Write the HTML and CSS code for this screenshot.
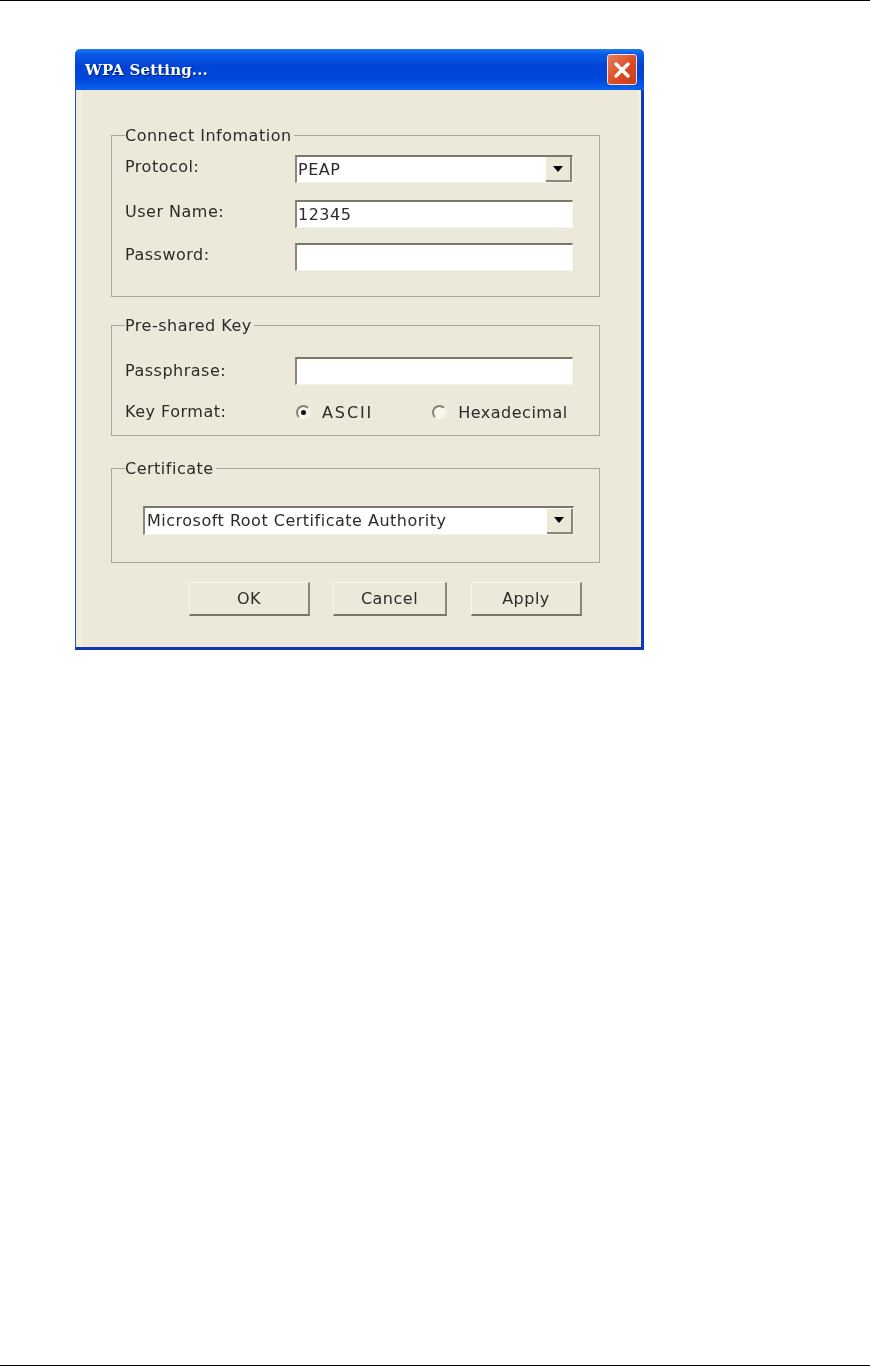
FILE: index.html
```html
<!DOCTYPE html>
<html>
<head>
<title>WPA Setting</title>
<link rel="stylesheet" href="styles.css">
</head>
<body>
<div class="page">
  <div class="dialog">
    <div class="titlebar">
      <span class="title">WPA Setting...</span>
      <span class="close">
        <svg width="18" height="18" viewBox="0 0 18 18"><path d="M3 3 L15 15 M15 3 L3 15" stroke="#fff" stroke-width="3.4" stroke-linecap="round"/></svg>
      </span>
    </div>
    <div class="client">

      <fieldset class="group connect">
        <legend>Connect Infomation</legend>
        <div class="label">Protocol:</div>
        <div class="field combo"><span class="value">PEAP</span><span class="drop"><span class="arrow"></span></span></div>
        <div class="label">User Name:</div>
        <div class="field"><span class="value">12345</span></div>
        <div class="label">Password:</div>
        <div class="field"></div>
      </fieldset>

      <fieldset class="group preshared">
        <legend>Pre-shared Key</legend>
        <div class="label">Passphrase:</div>
        <div class="field"></div>
        <div class="label">Key Format:</div>
        <div class="radios">
          <span class="radio-item ascii"><span class="radio on"></span>ASCII</span>
          <span class="radio-item"><span class="radio"></span>Hexadecimal</span>
        </div>
      </fieldset>

      <fieldset class="group cert">
        <legend>Certificate</legend>
        <div class="field combo"><span class="value">Microsoft Root Certificate Authority</span><span class="drop"><span class="arrow"></span></span></div>
      </fieldset>

      <div class="buttons">
        <div class="btn ok">OK</div>
        <div class="btn cancel">Cancel</div>
        <div class="btn apply">Apply</div>
      </div>
    </div>
  </div>
</div>
</body>
</html>
```

FILE: styles.css
```css
html, body { margin: 0; padding: 0; background: #fff; }

.page {
  box-sizing: border-box;
  height: 1366px;
  padding: 48px 0 0 75px;
  border-top: 1px solid #000;
  border-bottom: 1px solid #000;
}

.dialog {
  width: 569px;
  font-family: "DejaVu Sans", sans-serif;
  font-size: 16px;
  letter-spacing: 0.5px;
  color: #2b2b2b;
  filter: blur(0.5px);
}

.titlebar {
  height: 41px;
  box-sizing: border-box;
  padding: 0 7px 0 10px;
  display: flex;
  align-items: center;
  justify-content: space-between;
  border-radius: 5px 5px 0 0;
  background: linear-gradient(#1f7cf0 0, #0a5ae6 12%, #0042d6 45%, #0048dc 75%, #0a62ee 100%);
}
.title {
  font-family: "DejaVu Serif", serif;
  font-weight: bold;
  font-size: 15px;
  letter-spacing: 0.15px;
  color: #fff;
  text-shadow: 1px 1px 1px #00227a;
}
.close {
  width: 30px;
  height: 31px;
  box-sizing: border-box;
  display: flex;
  align-items: center;
  justify-content: center;
  border: 1px solid #f0e4dc;
  border-radius: 3px;
  background: linear-gradient(135deg, #e8805e, #dd4a24 55%, #c83c18);
}

.client {
  box-sizing: border-box;
  height: 560px;
  padding: 37px 0 0 35px;
  background: #ece8da;
  border-left: 1px solid #1a5ad8;
  border-right: 3px solid #0a3ab8;
  border-bottom: 3px solid #0a3ab8;
  box-shadow: inset 2px 0 #f3e6e0, inset 6px 0 #f2efd8, inset 0 -3px #f3e6e0, inset -3px 0 #f4f0d8;
}

.group {
  box-sizing: border-box;
  width: 489px;
  margin: 0;
  border: 1px solid #aba798;
  padding: 0 26px 0 13px;
  display: grid;
  grid-template-columns: 170px 278px;
  align-items: center;
}
.group legend {
  line-height: 17px;
  padding: 0 2px 0 0;
  margin: 0;
  background: #ece8da;
}
.connect { height: 170px; grid-template-rows: 45px 43px 28px; padding-top: 11px; margin-bottom: 20px; }
.preshared { height: 119px; grid-template-rows: 41px 28px; padding-top: 23px; margin-bottom: 24px; }
.cert { height: 103px; padding: 29px 24px 0 31px; display: block; margin-bottom: 19px; }
.cert legend { margin-left: -18px; }

.field {
  box-sizing: border-box;
  height: 28px;
  align-self: start;
  display: flex;
  align-items: center;
  justify-content: space-between;
  background: #fff;
  border-top: 2px solid #7b786a;
  border-left: 2px solid #8a8778;
  border-right: 1px solid #f6f4ea;
  border-bottom: 1px solid #f6f4ea;
  padding-left: 1px;
}
.value { white-space: nowrap; }
.cert .field { width: 431px; height: 29px; padding-left: 2px; }
.cert .value { padding-bottom: 2px; }

.drop {
  box-sizing: border-box;
  width: 26px;
  height: 25px;
  display: flex;
  align-items: center;
  justify-content: center;
  background: #ece8da;
  border-right: 2px solid #8a8778;
  border-bottom: 2px solid #8a8778;
}
.arrow {
  width: 0;
  height: 0;
  border-left: 5px solid transparent;
  border-right: 5px solid transparent;
  border-top: 6px solid #000;
}

.label { align-self: start; line-height: 24px; }
.preshared .label { line-height: 28px; }

.radios {
  display: flex;
  gap: 59px;
  padding-left: 1px;
}
.radio-item { display: flex; align-items: center; gap: 11px; }
.ascii { letter-spacing: 1.9px; }
.radio {
  box-sizing: border-box;
  width: 15px;
  height: 15px;
  border-radius: 50%;
  display: flex;
  align-items: center;
  justify-content: center;
  background: #f8f6ee;
  border: 2px solid;
  border-color: #858274 #f4f1e6 #f4f1e6 #858274;
}
.radio.on::before {
  content: "";
  width: 5px;
  height: 5px;
  border-radius: 50%;
  background: #111;
}

.buttons { display: flex; margin-left: 78px; }
.btn {
  box-sizing: border-box;
  height: 34px;
  display: flex;
  align-items: center;
  justify-content: center;
  background: #ece8da;
  border-top: 1px solid #f8f6ee;
  border-left: 1px solid #f8f6ee;
  border-right: 2px solid #8a8778;
  border-bottom: 2px solid #77746a;
}
.ok { width: 121px; margin-right: 23px; }
.cancel { width: 114px; margin-right: 24px; }
.apply { width: 111px; }
```
